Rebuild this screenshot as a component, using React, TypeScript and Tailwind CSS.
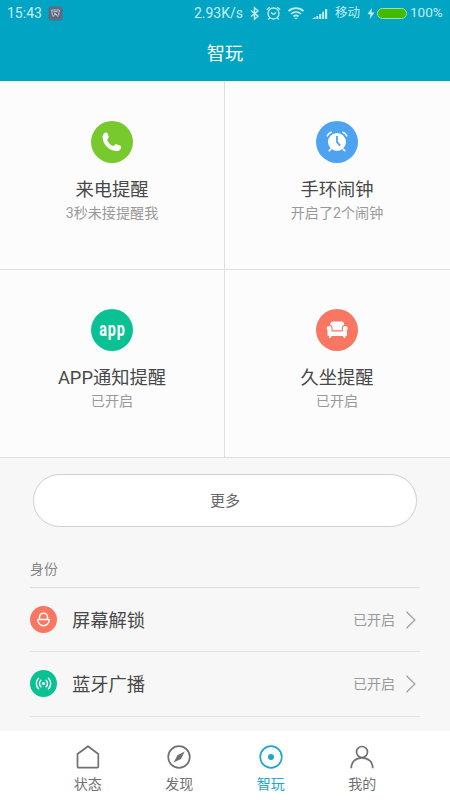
import type { ReactNode } from 'react';

function PhoneIcon() {
  return (
    <svg width="42" height="42" viewBox="0 0 42 42">
      <circle cx="21" cy="21" r="21" fill="#78c92d" />
      <path d="M12.2 13.4c.8-1.300 2.100-2.100 3.300-1.900.8.100 1.300 1.300 1.900 3.300.5 1.700.2 2.300-.7 3.100-.7.600-.6 1.200 0 2.300 1 1.800 2.400 3.300 4.200 4.400 1 .6 1.600.7 2.200 0 .9-1.100 1.600-1.600 3-1.100l2.600 1c1.500.6 1.800 1.200 1.400 2.400-.7 2-2.500 3.300-5 3.100-7.300-.6-13-6.700-13.500-13.300-.1-1.200 0-2.300.6-3.300z" fill="#fff" />
    </svg>
  );
}

function AlarmIcon() {
  return (
    <svg width="42" height="42" viewBox="0 0 42 42">
      <circle cx="21" cy="21" r="21" fill="#4ea3f1" />
      <circle cx="21" cy="21" r="9" fill="#fff" />
      <g fill="none" stroke="#fff" strokeLinecap="round">
        <path d="M11.200 14.900Q12.400 12.400 15.200 11.300M30.800 14.900Q29.600 12.400 26.800 11.300" strokeWidth="1.500" />
        <path d="M14.600 28.400l-1.300 1.300M27.400 28.400l1.300 1.300" strokeWidth="1.700" />
      </g>
      <path d="M21 15v6.200l3.300 3.400" fill="none" stroke="#4ea3f1" strokeWidth="1.800" />
    </svg>
  );
}

function AppIcon() {
  return (
    <div className="flex h-[42px] w-[42px] items-center justify-center rounded-full bg-[#0ac193]">
      <span className="mt-[-3px] scale-x-[.72] font-['Roboto',sans-serif] text-[20px] leading-none font-bold tracking-[1.2px] text-white">app</span>
    </div>
  );
}

function SofaIcon() {
  return (
    <svg width="42" height="42" viewBox="0 0 42 42">
      <circle cx="21" cy="21" r="21" fill="#f97663" />
      <g fill="#fff">
        <path d="M14.200 15.500c0-2 1-3 3-3h8c2 0 3 1 3 3v.6c-1.700.4-2.400 1.500-2.400 3.100v2H16.600v-2c0-1.600-.7-2.700-2.400-3.100z" />
        <path d="M10.700 19.300c0-1.400 1-2.300 2.400-2.300 1.500 0 2.400.9 2.400 2.300v3.200h11.400v-3.200c0-1.400.9-2.300 2.400-2.300 1.400 0 2.400.9 2.400 2.300 0 .8-.3 1.400-.8 1.900v4.600c0 .8-.5 1.200-1.300 1.200H12.800c-.8 0-1.300-.4-1.300-1.200v-4.600c-.5-.5-.8-1.100-.8-1.900z" />
        <path d="M13 27h2.700l-1.500 2h-1.200zM26.700 27h2.700v2h-1.200z" />
      </g>
    </svg>
  );
}

function Chevron() {
  return (
    <svg width="12" height="20" viewBox="0 0 12 20" fill="none" stroke="#a9a9a9" strokeWidth="1.500">
      <path d="M1.500 1.800L9.800 10l-8.300 8.200" />
    </svg>
  );
}

function Feature({ icon, title, note, side }: { icon: ReactNode; title: string; note: string; side: string }) {
  return (
    <div className={`flex flex-col items-center border-b border-[#dfdfdf] bg-[#fcfcfc] ${side}`}>
      {icon}
      <div className="mt-[14px] text-[18.300px] leading-[26px] text-[#484848]">{title}</div>
      <div className="text-[14.100px] leading-[20px] text-[#999]">{note}</div>
    </div>
  );
}

function Row({ icon, title, border }: { icon: ReactNode; title: string; border: string }) {
  return (
    <div className={`flex items-center border-b border-[#e2e2e2] ${border}`}>
      {icon}
      <span className="ml-[15px] flex-1 pt-[2px] text-[18.300px] leading-[26px] text-[#484848]">{title}</span>
      <span className="text-[14px] leading-5 text-[#999]">已开启</span>
      <span className="mr-[3px] ml-[10px]"><Chevron /></span>
    </div>
  );
}

function Tab({ icon, label, color }: { icon: ReactNode; label: string; color: string }) {
  return (
    <div className={`flex flex-1 flex-col items-center pt-[13px] ${color}`}>
      <svg width="26" height="26" viewBox="0 0 26 26" fill="none" stroke="currentColor" strokeWidth="1.700" strokeLinejoin="round">
        {icon}
      </svg>
      <span className="mt-[4px] text-[14px] leading-5">{label}</span>
    </div>
  );
}

function StatusBar() {
  return (
    <div className="flex h-[26px] items-center pr-[8px] pl-[7px] text-[14px] leading-none text-[#c5edf5]">
      <span className="w-[41px]">15:43</span>
      <svg width="15" height="15" viewBox="0 0 15 15">
        <rect x=".5" y=".5" width="14" height="14" rx="2.500" fill="#5b6b80" />
        <path d="M4.500 9.500L3.600 4h7.800l-.9 5.500M5.500 5.700h4M5 10.800l2.500-3.300 2.500 3.300M6 7.300l3 2" fill="none" stroke="#c7cfdb" strokeWidth=".9" />
      </svg>
      <span className="ml-auto">2.93K/s</span>
      <svg className="ml-[7px]" width="9" height="15" viewBox="0 0 9 15" fill="none" stroke="currentColor" strokeWidth="1.400">
        <path d="M1 4.500l7 5.700-3.500 3V1.800l3.500 3-7 5.700" />
      </svg>
      <svg className="ml-[7px]" width="15" height="15" viewBox="0 0 15 15" fill="none" stroke="currentColor" strokeWidth="1.300">
        <circle cx="7.500" cy="7.500" r="5.500" />
        <path d="M.8 3.800L3.800 1.200M14.200 3.800L11.200 1.200M3.700 11.900l-1.400 1.600M11.300 11.900l1.400 1.600M5 6.500l2.500 2 2.700-2" />
      </svg>
      <svg className="ml-[6px]" width="18" height="15" viewBox="0 0 18 15" fill="none" stroke="currentColor" strokeWidth="1.700">
        <path d="M1.500 5.200c4.200-4.100 10.800-4.100 15 0M4 8c2.800-2.700 7.200-2.700 10 0M6.500 10.500c1.500-1.300 3.500-1.300 5 0" />
        <path d="M7.300 11.700h3.400L9 13.400z" fill="currentColor" stroke="none" />
      </svg>
      <svg className="ml-[7px]" width="16" height="13" viewBox="0 0 16 13" fill="currentColor">
        <path d="M0 12l3.500-2.300V12zM4.300 9h2v3h-2zM7.200 7h2v5h-2zM10.100 4.700h2V12h-2zM13 2h2.200v10H13z" />
      </svg>
      <span className="ml-[7px] w-[25px] pt-px text-[12.500px] whitespace-nowrap">移动</span>
      <svg className="ml-[7px]" width="8" height="13" viewBox="0 0 8 13" fill="currentColor">
        <path d="M4.800 1L.5 7.200h3L2.700 12 7.500 5.600h-3z" />
      </svg>
      <span className="ml-[2px] h-[11px] w-[30px] rounded-full border border-[#a9dfa0] bg-[#43b900]" />
      <span className="ml-[3px] w-[32px] text-[13.500px]">100%</span>
    </div>
  );
}

export default function App() {
  return (
    <div className="flex h-[800px] w-[450px] flex-col overflow-hidden bg-[#f7f7f7] font-['Roboto','Noto_Sans_CJK_SC',sans-serif]">
      <header className="h-[81px] shrink-0 bg-[#02a4c3]">
        <StatusBar />
        <h1 className="mt-[15px] text-center text-[18.200px] leading-[26px] text-white">智玩</h1>
      </header>

      <section className="grid shrink-0 grid-cols-2">
        <Feature side="h-[189px] border-r pt-[40px]" icon={<PhoneIcon />} title="来电提醒" note="3秒未接提醒我" />
        <Feature side="h-[189px] pt-[40px] pr-px" icon={<AlarmIcon />} title="手环闹钟" note="开启了2个闹钟" />
        <Feature side="h-[188px] border-r pt-[39px]" icon={<AppIcon />} title="APP通知提醒" note="已开启" />
        <Feature side="h-[188px] pt-[39px] pr-px" icon={<SofaIcon />} title="久坐提醒" note="已开启" />
      </section>

      <button className="mx-[33px] mt-[16px] h-[53px] shrink-0 rounded-full border border-[#cfcfcf] bg-white pt-[2px] text-[15px] text-[#666]">更多</button>

      <section className="mx-[30px] flex-1">
        <h2 className="h-[61px] border-b border-[#dfdfdf] pt-[32px] text-[14px] leading-5 text-[#888]">身份</h2>
        <Row
          border="h-[64px]"
          title="屏幕解锁"
          icon={
            <svg width="27" height="27" viewBox="0 0 27 27">
              <circle cx="13.500" cy="13.500" r="13.500" fill="#f97663" />
              <path d="M7.800 13.500h11.400v.5a5.700 5.700 0 0 1-11.400 0zM9.500 13.200v-2a4 4 0 0 1 8 0v2" fill="none" stroke="#fff" strokeWidth="1.500" strokeLinejoin="round" />
            </svg>
          }
        />
        <Row
          border="h-[65px] pb-px"
          title="蓝牙广播"
          icon={
            <svg width="27" height="27" viewBox="0 0 27 27">
              <circle cx="13.500" cy="13.500" r="13.500" fill="#0ac193" />
              <circle cx="13.500" cy="13.500" r="1.600" fill="#fff" />
              <path d="M10.900 10.300a4.300 4.300 0 0 0 0 6.400M16.100 10.300a4.300 4.300 0 0 1 0 6.400M8.500 8.300a7.300 7.300 0 0 0 0 10.400M18.500 8.300a7.300 7.300 0 0 1 0 10.400" fill="none" stroke="#fff" strokeWidth="1.400" strokeLinecap="round" />
            </svg>
          }
        />
      </section>

      <nav className="flex h-[69px] shrink-0 bg-white px-[42px]">
        <Tab color="text-[#707070]" label="状态" icon={<path d="M2.500 10L13 2.200l10.300 7.800v12.600q0 1-1 1h-18.800q-1 0-1-1z" />} />
        <Tab
          color="text-[#707070]"
          label="发现"
          icon={
            <>
              <circle cx="13" cy="13" r="10.800" />
              <path d="M18.700 7.600l-3.700 7.300-7.300 3.600 3.700-7.300z" fill="currentColor" stroke="none" />
            </>
          }
        />
        <Tab
          color="text-[#1aa9c6]"
          label="智玩"
          icon={
            <>
              <circle cx="13" cy="13" r="10.800" />
              <circle cx="13" cy="13" r="3" fill="currentColor" stroke="none" />
            </>
          }
        />
        <Tab
          color="text-[#707070]"
          label="我的"
          icon={
            <>
              <circle cx="13" cy="8" r="5.500" />
              <path d="M2.200 24.300c0-6.200 4.400-10.500 10.800-10.500s10.800 4.300 10.800 10.500" />
            </>
          }
        />
      </nav>
    </div>
  );
}
